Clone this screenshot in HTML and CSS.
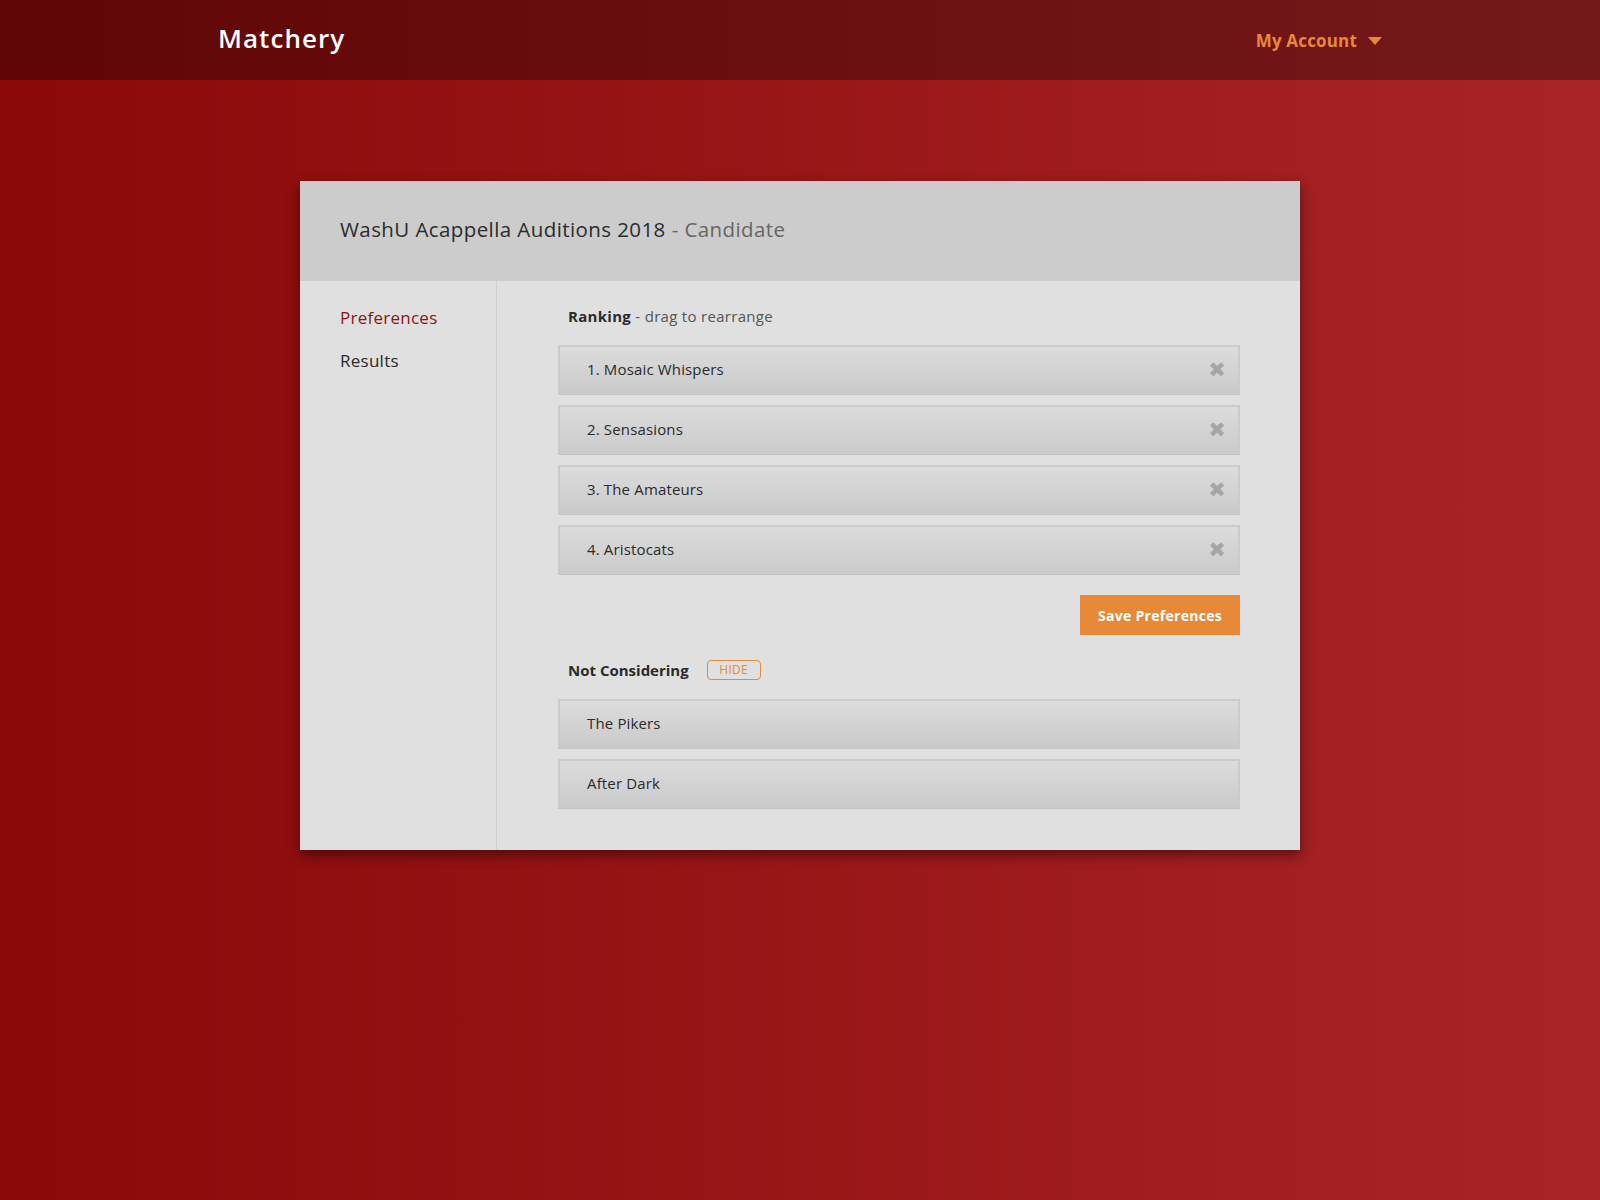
FILE: index.html
```html
<!DOCTYPE html>
<html>
<head>
<meta charset="utf-8">
<title>Matchery</title>
<link rel="stylesheet" href="styles.css">
</head>
<body>
<header class="topbar">
  <div class="topbar-inner">
    <div class="logo">Matchery</div>
    <div class="account">My Account <span class="caret"></span></div>
  </div>
</header>
<main class="page">
  <section class="card">
    <div class="card-head">WashU Acappella Auditions 2018 <span class="role">- Candidate</span></div>
    <div class="card-body">
      <nav class="side">
        <a class="side-link active">Preferences</a>
        <a class="side-link">Results</a>
      </nav>
      <div class="content">
        <div class="label"><b>Ranking</b> - drag to rearrange</div>
        <ul class="list">
          <li class="row"><span>1. Mosaic Whispers</span><span class="x">&#10006;</span></li>
          <li class="row"><span>2. Sensasions</span><span class="x">&#10006;</span></li>
          <li class="row"><span>3. The Amateurs</span><span class="x">&#10006;</span></li>
          <li class="row"><span>4. Aristocats</span><span class="x">&#10006;</span></li>
        </ul>
        <div class="actions"><button class="save">Save Preferences</button></div>
        <div class="label label-nc"><b>Not Considering</b><span class="hide">HIDE</span></div>
        <ul class="list">
          <li class="row"><span>The Pikers</span></li>
          <li class="row"><span>After Dark</span></li>
        </ul>
      </div>
    </div>
  </section>
</main>
</body>
</html>
```
FILE: styles.css
```css
html { min-height: 100%; }
body {
  margin: 0;
  min-height: 1200px;
  background: linear-gradient(to right, #8a0909, #a92427);
  font-family: "Open Sans", "DejaVu Sans", sans-serif;
  color: #333;
}
.topbar {
  height: 80px;
  background: rgba(0,0,0,0.3);
}
.topbar-inner {
  width: 1164px;
  margin: 0 auto;
  height: 80px;
  display: flex;
  align-items: center;
  justify-content: space-between;
}
.logo {
  color: #fff;
  font-size: 26px;
  font-weight: 600;
  letter-spacing: 0.04em;
  margin-top: -4px;
}
.account {
  color: #e8893a;
  font-size: 17px;
  font-weight: 700;
  display: flex;
  align-items: center;
  letter-spacing: 0.01em;
}
.caret {
  display: inline-block;
  width: 0; height: 0;
  border-left: 7px solid transparent;
  border-right: 7px solid transparent;
  border-top: 8px solid #e8893a;
  margin-left: 11px;
  margin-top: 2px;
}
.page { padding-top: 101px; }
.card {
  width: 1000px;
  margin: 0 auto;
  background: #e0e0e0;
  box-shadow: 0 5px 12px rgba(0,0,0,0.45);
}
.card-head {
  height: 100px;
  box-sizing: border-box;
  padding-bottom: 4px;
  background: #cccccc;
  display: flex;
  align-items: center;
  padding-left: 40px;
  font-size: 20.5px;
  color: #2b2b2b;
  letter-spacing: 0.02em;
}
.card-head .role { color: #666; margin-left: 6px; }
.card-body { display: flex; }
.side {
  width: 196px;
  border-right: 1px solid #cfcfcf;
  padding-top: 25px;
  display: flex;
  flex-direction: column;
  gap: 19px;
}
.side-link {
  padding-left: 40px;
  font-size: 17px;
  line-height: 24px;
  color: #2b2b2b;
  letter-spacing: 0.015em;
}
.side-link.active { color: #8e1414; }
.content {
  flex: 1;
  padding: 25px 60px 41px 61px;
}
.label {
  padding-left: 10px;
  font-size: 15px;
  line-height: 20px;
  color: #555;
  margin-bottom: 19px;
  letter-spacing: 0.02em;
}
.label b { color: #2b2b2b; font-weight: 700; }
.label-nc { display: flex; align-items: center; margin-bottom: 19px; }
.label-nc b { letter-spacing: 0; }
.hide {
  margin-left: 18px;
  border: 1px solid #e8893a;
  border-radius: 4px;
  color: #e8893a;
  font-size: 12px;
  line-height: 18px;
  width: 52px;
  text-align: center;
}
.list {
  list-style: none;
  margin: 0;
  padding: 0;
  display: flex;
  flex-direction: column;
  gap: 10px;
}
.row {
  height: 50px;
  box-sizing: border-box;
  border: 2px solid #cbcbcb;
  border-bottom: 1px solid #c4c4c4;
  background: linear-gradient(to bottom, #dcdcdc, #cacaca);
  display: flex;
  align-items: center;
  justify-content: space-between;
  padding: 0 12px 3px 27px;
  font-size: 15px;
  color: #2b2b2b;
  letter-spacing: 0.01em;
}
.x { color: #a6a6a6; font-size: 21px; line-height: 1; }
.actions {
  display: flex;
  justify-content: flex-end;
  margin: 20px 0 25px;
}
.save {
  width: 160px;
  height: 40px;
  border: 0;
  background: #e8893a;
  color: #fff;
  font-family: inherit;
  font-weight: 700;
  font-size: 14px;
  letter-spacing: 0.02em;
}
```
